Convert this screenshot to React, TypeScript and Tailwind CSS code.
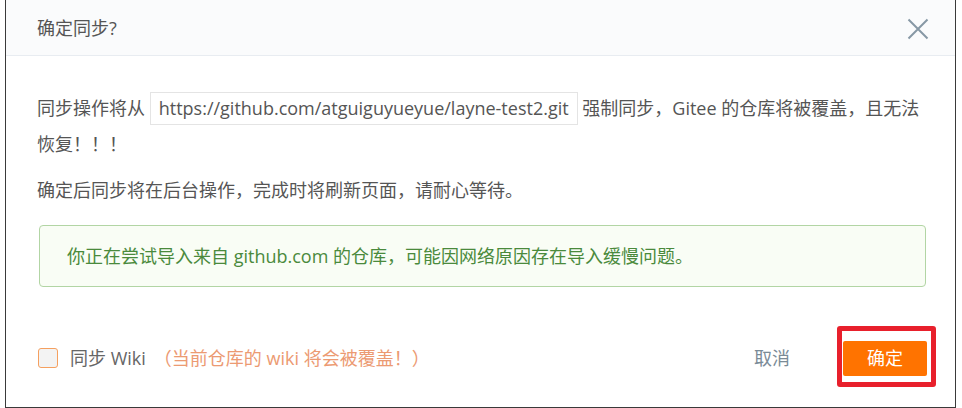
import React from "react";

export default function App() {
  return (
    <div
      className="relative w-[962px] h-[408px] bg-white overflow-hidden"
      style={{ fontFamily: '"Open Sans","Noto Sans CJK SC",sans-serif' }}
    >
      <div className="ml-[5px] w-[951px] h-[408px] border-x border-b border-[#3a3a3a] flex flex-col bg-white">
        {/* Header */}
        <div className="h-[56px] shrink-0 bg-[#fafbfc] border-b border-[#e8ecf1] flex items-center justify-between pl-[31px] pr-[26px]">
          <span className="text-[18px] text-[#555] leading-none">确定同步?</span>
          <svg width="22" height="22" viewBox="0 0 22 22" className="mt-[2px]">
            <path d="M1.5 1.5 L20.5 20.5 M20.5 1.5 L1.5 20.5" stroke="#8698a5" strokeWidth="2" fill="none" />
          </svg>
        </div>

        {/* Body */}
        <div className="pl-[31px] pr-[29px] pt-[34px] text-[18px] text-[#555]">
          <p className="leading-[36px]">
            同步操作将从{" "}
            <span className="inline-block h-[33px] leading-[31px] border border-[#e4e4e4] px-[8px] align-middle -mt-[3px]">
              https://github.com/atguiguyueyue/layne-test2.git
            </span>{" "}
            强制同步，Gitee 的仓库将被覆盖，且无法
            <br />
            恢复！！！
          </p>
          <p className="leading-[36px] mt-[10px]">确定后同步将在后台操作，完成时将刷新页面，请耐心等待。</p>
          <div className="mt-[17px] ml-[2px] h-[62px] flex items-center pl-[27px] bg-[#f9fdf5] border border-[#b2d5a4] rounded-[4px] text-[#4a8a3c]">
            你正在尝试导入来自 github.com 的仓库，可能因网络原因存在导入缓慢问题。
          </div>
        </div>

        {/* Footer */}
        <div className="mt-[39px] h-[64px] flex items-center pl-[32px] pr-[28px] text-[18px]">
          <span className="w-[20px] h-[20px] rounded-[3px] border border-[#f5a05f] bg-[#f3f3f3] shrink-0" />
          <span className="ml-[12px] text-[#666]">同步 Wiki</span>
          <span className="ml-[8px] text-[#ec9a72]">（当前仓库的 wiki 将会被覆盖！）</span>
          <span className="ml-auto text-[#7a8b97]">取消</span>
          <button className="ml-[53px] w-[84px] h-[35px] bg-[#ff7300] text-white rounded-[2px] text-[18px] leading-none">
            确定
          </button>
        </div>
      </div>

      {/* red annotation frame */}
      <div className="absolute left-[837px] top-[326px] w-[99px] h-[61px] border-[5px] border-[#e8202c] rounded-[3px]" />
    </div>
  );
}
